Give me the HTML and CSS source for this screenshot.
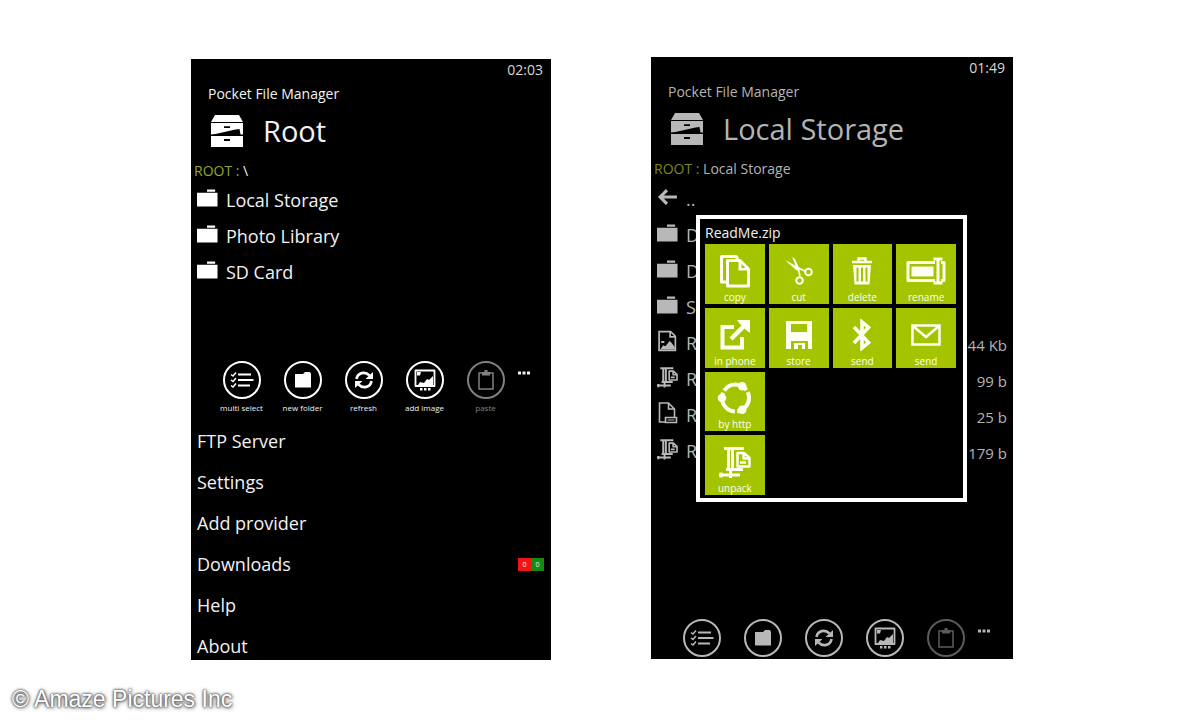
FILE: index.html
```html
<!DOCTYPE html>
<html lang="en">
<head>
    <meta charset="UTF-8">
    <meta name="viewport" content="width=device-width, initial-scale=1.0">
    <title>Pocket File Manager</title>
    <link rel="stylesheet" href="styles.css">
</head>
<body>
    <!-- Icon set -->
    <svg class="icon-set" aria-hidden="true">
        <symbol id="i-drawer" viewBox="0 0 32 32">
            <path fill="currentColor" d="M4 0h24l4 7H0zM0 8h32v11.500h-2.500l-1-5.500-4 .5-20 4.500-4.500.5zM0 21h32v11H0z"/>
            <path stroke="#000" stroke-width="1.800" d="M13 12.200h6M13 25h6"/>
        </symbol>
        <symbol id="i-folder" viewBox="0 0 22 18">
            <path fill="currentColor" d="M10.500 0h8.500v2.500h-8.500zM0 3.500h21.500V18H0z"/>
        </symbol>
        <symbol id="i-back" viewBox="0 0 20 16">
            <path fill="none" stroke="currentColor" stroke-width="3" d="M9.500 1.500L3 8l6.500 6.500M3 8h16"/>
        </symbol>
        <symbol id="i-image-file" viewBox="0 0 20 20">
            <path fill="none" stroke="currentColor" stroke-width="1.600" d="M2 1h11l4.500 4.500V19H2zM12.500 1v5h5"/>
            <path fill="currentColor" d="M3 18l3-4 2 1 4-5 2 2 3 4v2zM4 10h3v2H4z"/>
        </symbol>
        <symbol id="i-file" viewBox="0 0 20 22">
            <path fill="none" stroke="currentColor" stroke-width="1.600" d="M8 20H2V1h9l6 6v8M11 1v6h6M8 15.500h11v5H8z"/>
            <path fill="none" stroke="currentColor" d="M10 18h7"/>
        </symbol>
        <symbol id="i-zip" viewBox="0 0 32 32">
            <path fill="none" stroke="currentColor" stroke-width="3" d="M5 2.500h20M9.500 3v21M13.500 4v19M7 23.500h17"/>
            <path fill="none" stroke="currentColor" stroke-width="2.500" stroke-linejoin="round" d="M18.500 7h6.500l5.500 5v8.500h-12zM24.500 7v5.500h6M21 16.500h6"/>
            <path fill="none" stroke="currentColor" stroke-width="3" d="M0 29h21M2 26.500v5M11.500 24v8"/>
        </symbol>
        <symbol id="i-select" viewBox="0 0 24 16">
            <path fill="none" stroke="currentColor" stroke-width="2" d="M8 2.500h13M8 8h15.500M8 13.500h12"/>
            <path fill="none" stroke="currentColor" stroke-width="1.500" d="M1 2.500l2 1.500 3-3.500M1 8l2 1.500L6 6M1 13.500L3 15l3-3.500"/>
        </symbol>
        <symbol id="i-new-folder" viewBox="0 0 18 16">
            <path fill="currentColor" d="M1 2h8l2-2h5l1 2v13.500H1z"/>
        </symbol>
        <symbol id="i-refresh" viewBox="0 0 20 20">
            <path fill="none" stroke="currentColor" stroke-width="2.600" d="M2.500 9C3.500 2.500 11 1 15.500 5.500M17.500 11C16.500 17.500 9 19 4.500 14.500"/>
            <path fill="currentColor" d="M19 2v7h-7.500zM1 18v-7h7.500z"/>
        </symbol>
        <symbol id="i-add-image" viewBox="0 0 22 24">
            <path fill="none" stroke="currentColor" stroke-width="1.800" stroke-linejoin="round" d="M1.500 2.500h19V18h-19z"/>
            <path fill="currentColor" d="M4 17l2-3 4 1 3-4 2 1 4-4v9zM3 4h4L6 7.500H3zM6 20h2.500v2.500H6zM10 20h2.500v2.500H10zM14 20h2.500v2.500H14z"/>
        </symbol>
        <symbol id="i-paste" viewBox="0 0 16 20">
            <path fill="none" stroke="currentColor" stroke-width="1.500" d="M1 3h14v16H1z"/>
            <path fill="currentColor" d="M4 2h2.500V0h3v2H12v3.500H4z"/>
        </symbol>
        <symbol id="i-more" viewBox="0 0 14 4">
            <path fill="currentColor" d="M1 .5h3v3H1zM5.500 .5h3v3h-3zM10 .5h3v3h-3z"/>
        </symbol>
        <symbol id="i-copy" viewBox="0 0 32 34">
            <path fill="none" stroke="currentColor" stroke-width="3" stroke-linejoin="round" d="M7 28H2.500V2.500H17L19 5"/>
            <path fill="none" stroke="currentColor" stroke-width="3" stroke-linejoin="round" d="M8.500 6.500H21l8.500 8.500v17h-21z"/>
            <path fill="currentColor" d="M19.500 7v9.500H29l-2-2.500h-4.500V9z"/>
        </symbol>
        <symbol id="i-cut" viewBox="0 0 30 28">
            <path fill="none" stroke="currentColor" stroke-width="1.600" d="M12 10l9 4M14 11l2 8"/>
            <path fill="currentColor" d="M1 3l15 8-1 3-3-1zM8 0l3 2 5 11-2 1z"/>
            <circle cx="24.500" cy="15" r="3.300" fill="none" stroke="currentColor" stroke-width="2"/>
            <circle cx="15.500" cy="23.500" r="3.300" fill="none" stroke="currentColor" stroke-width="2"/>
        </symbol>
        <symbol id="i-delete" viewBox="0 0 22 28">
            <path fill="none" stroke="currentColor" stroke-width="2.500" d="M1 5h20M7.500 4V1.500h7V4"/>
            <path fill="currentColor" fill-rule="evenodd" d="M2 8h18l-1.500 19.500h-15zM5.500 10.500v14h2v-14zM10 10.500v14h2v-14zM14.500 10.500v14h2v-14z"/>
        </symbol>
        <symbol id="i-rename" viewBox="0 0 40 28">
            <path fill="none" stroke="currentColor" stroke-width="3" stroke-linejoin="round" d="M29 5.500H2v18h27M35 5.500h3v18h-3"/>
            <path fill="currentColor" d="M5.500 9.500h22v10h-22z"/>
            <path fill="none" stroke="currentColor" stroke-width="3" d="M32 2v24M27.500 2h9M27.500 26h9"/>
        </symbol>
        <symbol id="i-export" viewBox="0 0 30 30">
            <path fill="none" stroke="currentColor" stroke-width="4" d="M14 7H2.500v20.500H22V17"/>
            <path fill="none" stroke="currentColor" stroke-width="4.500" d="M11 19L25 5"/>
            <path fill="currentColor" d="M17 0h13v13l-4-3-6-6z"/>
        </symbol>
        <symbol id="i-save" viewBox="0 0 28 28">
            <path fill="currentColor" fill-rule="evenodd" d="M1 0h26v28h-4v-8H6v8H1zM6 3v8h16V3zM9 22h11v6h-3v-4h-4v4H9z"/>
        </symbol>
        <symbol id="i-bluetooth" viewBox="0 0 20 32">
            <path fill="none" stroke="currentColor" stroke-width="3.600" d="M2 8l14.500 15.500L10 29V3l6.500 5.500L2 24"/>
        </symbol>
        <symbol id="i-mail" viewBox="0 0 30 22">
            <path fill="none" stroke="currentColor" stroke-width="2.500" d="M1.500 1.500h27v19h-27zM2 2l13 11L28 2"/>
        </symbol>
        <symbol id="i-http" viewBox="0 0 36 34">
            <circle cx="18.500" cy="17" r="13.500" fill="none" stroke="currentColor" stroke-width="4" stroke-dasharray="25.870 2.400" stroke-dashoffset="-21.700"/>
            <circle cx="5" cy="17" r="4.300" fill="currentColor"/>
            <circle cx="25.200" cy="5.300" r="4.300" fill="currentColor"/>
            <circle cx="25.200" cy="28.700" r="4.300" fill="currentColor"/>
        </symbol>
    </svg>

    <main class="screens">
        <section class="phone phone-root">
            <div class="clock">02:03</div>
            <header class="app-header">
                <div class="app-name">Pocket File Manager</div>
                <div class="app-location">
                    <svg class="drawer-icon"><use href="#i-drawer"/></svg>
                    <h1>Root</h1>
                </div>
            </header>
            <nav class="path"><a href="#">ROOT :</a> \</nav>
            <ul class="files">
                <li><a href="#"><svg class="folder-icon"><use href="#i-folder"/></svg>Local Storage</a></li>
                <li><a href="#"><svg class="folder-icon"><use href="#i-folder"/></svg>Photo Library</a></li>
                <li><a href="#"><svg class="folder-icon"><use href="#i-folder"/></svg>SD Card</a></li>
            </ul>
            <div class="app-bar">
                <button class="bar-btn"><span class="circle"><svg class="select-icon"><use href="#i-select"/></svg></span>multi select</button>
                <button class="bar-btn"><span class="circle"><svg class="new-folder-icon"><use href="#i-new-folder"/></svg></span>new folder</button>
                <button class="bar-btn"><span class="circle"><svg class="refresh-icon"><use href="#i-refresh"/></svg></span>refresh</button>
                <button class="bar-btn"><span class="circle"><svg class="add-image-icon"><use href="#i-add-image"/></svg></span>add image</button>
                <button class="bar-btn" disabled><span class="circle"><svg class="paste-icon"><use href="#i-paste"/></svg></span>paste</button>
                <button class="more-btn" aria-label="More"><svg class="more-icon"><use href="#i-more"/></svg></button>
            </div>
            <ul class="menu">
                <li><a href="#">FTP Server</a></li>
                <li><a href="#">Settings</a></li>
                <li><a href="#">Add provider</a></li>
                <li><a href="#">Downloads</a><span class="badges"><span class="badge failed">0</span><span class="badge done">0</span></span></li>
                <li><a href="#">Help</a></li>
                <li><a href="#">About</a></li>
            </ul>
        </section>

        <section class="phone phone-storage">
            <div class="clock">01:49</div>
            <header class="app-header">
                <div class="app-name">Pocket File Manager</div>
                <div class="app-location">
                    <svg class="drawer-icon"><use href="#i-drawer"/></svg>
                    <h1>Local Storage</h1>
                </div>
            </header>
            <nav class="path"><a href="#">ROOT :</a> Local Storage</nav>
            <ul class="files">
                <li><a href="#"><svg class="back-icon"><use href="#i-back"/></svg>..</a></li>
                <li><a href="#"><svg class="folder-icon"><use href="#i-folder"/></svg>D</a></li>
                <li><a href="#"><svg class="folder-icon"><use href="#i-folder"/></svg>D</a></li>
                <li><a href="#"><svg class="folder-icon"><use href="#i-folder"/></svg>S</a></li>
                <li><a href="#"><svg class="file-icon"><use href="#i-image-file"/></svg>R</a><span class="size">.44 Kb</span></li>
                <li><a href="#"><svg class="file-icon"><use href="#i-zip"/></svg>R</a><span class="size">99 b</span></li>
                <li><a href="#"><svg class="file-icon"><use href="#i-file"/></svg>R</a><span class="size">25 b</span></li>
                <li><a href="#"><svg class="file-icon"><use href="#i-zip"/></svg>R</a><span class="size">179 b</span></li>
            </ul>
            <div class="app-bar">
                <button class="bar-btn" aria-label="multi select"><span class="circle"><svg class="select-icon"><use href="#i-select"/></svg></span></button>
                <button class="bar-btn" aria-label="new folder"><span class="circle"><svg class="new-folder-icon"><use href="#i-new-folder"/></svg></span></button>
                <button class="bar-btn" aria-label="refresh"><span class="circle"><svg class="refresh-icon"><use href="#i-refresh"/></svg></span></button>
                <button class="bar-btn" aria-label="add image"><span class="circle"><svg class="add-image-icon"><use href="#i-add-image"/></svg></span></button>
                <button class="bar-btn" aria-label="paste" disabled><span class="circle"><svg class="paste-icon"><use href="#i-paste"/></svg></span></button>
                <button class="more-btn" aria-label="More"><svg class="more-icon"><use href="#i-more"/></svg></button>
            </div>

            <div class="dialog" role="dialog" aria-labelledby="dialog-title">
                <h2 id="dialog-title">ReadMe.zip</h2>
                <div class="tiles">
                    <button class="tile"><svg class="copy-icon"><use href="#i-copy"/></svg><span>copy</span></button>
                    <button class="tile"><svg class="cut-icon"><use href="#i-cut"/></svg><span>cut</span></button>
                    <button class="tile"><svg class="delete-icon"><use href="#i-delete"/></svg><span>delete</span></button>
                    <button class="tile"><svg class="rename-icon"><use href="#i-rename"/></svg><span>rename</span></button>
                    <button class="tile"><svg class="export-icon"><use href="#i-export"/></svg><span>in phone</span></button>
                    <button class="tile"><svg class="save-icon"><use href="#i-save"/></svg><span>store</span></button>
                    <button class="tile"><svg class="bluetooth-icon"><use href="#i-bluetooth"/></svg><span>send</span></button>
                    <button class="tile"><svg class="mail-icon"><use href="#i-mail"/></svg><span>send</span></button>
                    <button class="tile new-row"><svg class="http-icon"><use href="#i-http"/></svg><span>by http</span></button>
                    <button class="tile new-row"><svg class="zip-icon"><use href="#i-zip"/></svg><span>unpack</span></button>
                </div>
            </div>
        </section>
    </main>

    <footer>© Amaze Pictures Inc</footer>
</body>
</html>
```

FILE: styles.css
```css
:root {
    --text: #f2f2f2;
    --icon: #ffffff;
    --accent: #94a82e;
    --lime: #a4c400;
}

* {
    margin: 0;
    padding: 0;
    box-sizing: border-box;
}

body {
    background: #fff;
    font-family: 'Open Sans', 'Noto Sans', sans-serif;
}

a {
    color: inherit;
    text-decoration: none;
}

ul {
    list-style: none;
}

button {
    background: none;
    border: none;
    color: inherit;
    font-family: inherit;
    cursor: pointer;
}

svg {
    display: block;
    flex: none;
}

.icon-set {
    position: absolute;
    width: 0;
    height: 0;
}

.screens {
    display: flex;
    justify-content: center;
    align-items: flex-start;
    gap: 100px;
    padding: 57px 20px 0 24px;
}

.phone {
    position: relative;
    flex: 0 1 362px;
    background: #000;
    color: var(--text);
}

.phone-root {
    flex-basis: 360px;
    margin-top: 2px;
}

.phone-storage {
    --text: #b4b4b4;
    --icon: #b8b8b8;
    --accent: #7c8a1a;
}

.clock {
    padding: 1px 8px 0;
    font-size: 14px;
    line-height: 20px;
    text-align: right;
    color: #d8d8d8;
}

.app-header {
    padding: 4px 17px 0;
}

.app-name {
    font-size: 14px;
    line-height: 20px;
}

.app-location {
    display: flex;
    align-items: center;
    gap: 20px;
    height: 54px;
    padding-left: 3px;
}

.app-location h1 {
    font-size: 29px;
    font-weight: 400;
    line-height: 40px;
}

.drawer-icon {
    width: 32px;
    height: 32px;
    color: var(--icon);
}

.path {
    padding: 1px 3px 0;
    font-size: 14px;
    line-height: 23px;
}

.path a {
    color: var(--accent);
}

.files {
    padding: 0 6px;
}

.files li {
    display: flex;
    justify-content: space-between;
    align-items: center;
    height: 36px;
}

.files a {
    display: flex;
    align-items: center;
    gap: 8px;
    font-size: 18px;
    line-height: 36px;
}

.folder-icon,
.back-icon,
.file-icon {
    width: 21px;
    height: 18px;
    margin-bottom: 4px;
    color: var(--icon);
}

.file-icon {
    height: 22px;
}

.size {
    padding-top: 4px;
    font-size: 15px;
}

.app-bar {
    display: flex;
    padding: 71px 0 0 20px;
}

.bar-btn {
    display: flex;
    flex-direction: column;
    align-items: center;
    width: 61px;
    font-size: 8px;
    line-height: 18px;
    white-space: nowrap;
}

.bar-btn:disabled {
    opacity: 0.5;
}

.circle {
    display: flex;
    justify-content: center;
    align-items: center;
    width: 38px;
    height: 38px;
    border: 2px solid var(--icon);
    border-radius: 50%;
    color: var(--icon);
}

.select-icon {
    width: 24px;
    height: 16px;
}

.new-folder-icon {
    width: 18px;
    height: 16px;
}

.refresh-icon {
    width: 20px;
    height: 20px;
}

.add-image-icon {
    width: 22px;
    height: 24px;
}

.paste-icon {
    width: 16px;
    height: 20px;
}

.more-btn {
    align-self: flex-start;
    padding: 10px 1px;
}

.more-icon {
    width: 14px;
    height: 4px;
}

.menu {
    display: flex;
    flex-direction: column;
    gap: 13px;
    padding: 10px 7px 0 6px;
}

.menu li {
    display: flex;
    justify-content: space-between;
    align-items: center;
    font-size: 18px;
    line-height: 28px;
}

.badges {
    display: flex;
}

.badge {
    width: 13px;
    font-size: 7px;
    line-height: 13px;
    text-align: center;
}

.failed {
    background: #f01414;
}

.done {
    background: #128c12;
}

.phone-storage .files {
    padding-top: 1px;
}

.phone-storage .app-bar {
    padding: 150px 0 2px 20px;
}

.dialog {
    position: absolute;
    top: 158px;
    left: 45px;
    width: 271px;
    padding: 4px 7px 3px 5px;
    border: 4px solid #fff;
    background: #000;
    color: #f2f2f2;
}

.dialog h2 {
    padding-bottom: 1px;
    font-size: 14px;
    font-weight: 400;
    line-height: 20px;
}

.tiles {
    display: grid;
    grid-template-columns: repeat(4, 1fr);
    gap: 4px;
}

.tile {
    display: flex;
    flex-direction: column;
    align-items: center;
    padding-top: 8px;
    aspect-ratio: 1;
    background: var(--lime);
    color: #fdfff0;
}

.tile span {
    font-size: 10px;
    line-height: 14px;
}

.tile svg {
    margin: auto;
}

.new-row {
    grid-column: 1;
}

.copy-icon {
    width: 32px;
    height: 34px;
}

.cut-icon {
    width: 30px;
    height: 28px;
}

.delete-icon {
    width: 22px;
    height: 28px;
}

.rename-icon {
    width: 40px;
    height: 28px;
}

.export-icon {
    width: 30px;
    height: 30px;
}

.save-icon {
    width: 28px;
    height: 28px;
}

.bluetooth-icon {
    width: 20px;
    height: 32px;
}

.mail-icon {
    width: 30px;
    height: 22px;
}

.http-icon {
    width: 36px;
    height: 34px;
}

.zip-icon {
    width: 32px;
    height: 32px;
}

footer {
    padding: 24px 12px 0;
    font-family: 'Liberation Sans', Arial, sans-serif;
    font-size: 23px;
    line-height: 30px;
    color: #fff;
    text-shadow: 0 0 2px #444, 0 0 3px #555, 1px 1px 4px #666;
}
```
